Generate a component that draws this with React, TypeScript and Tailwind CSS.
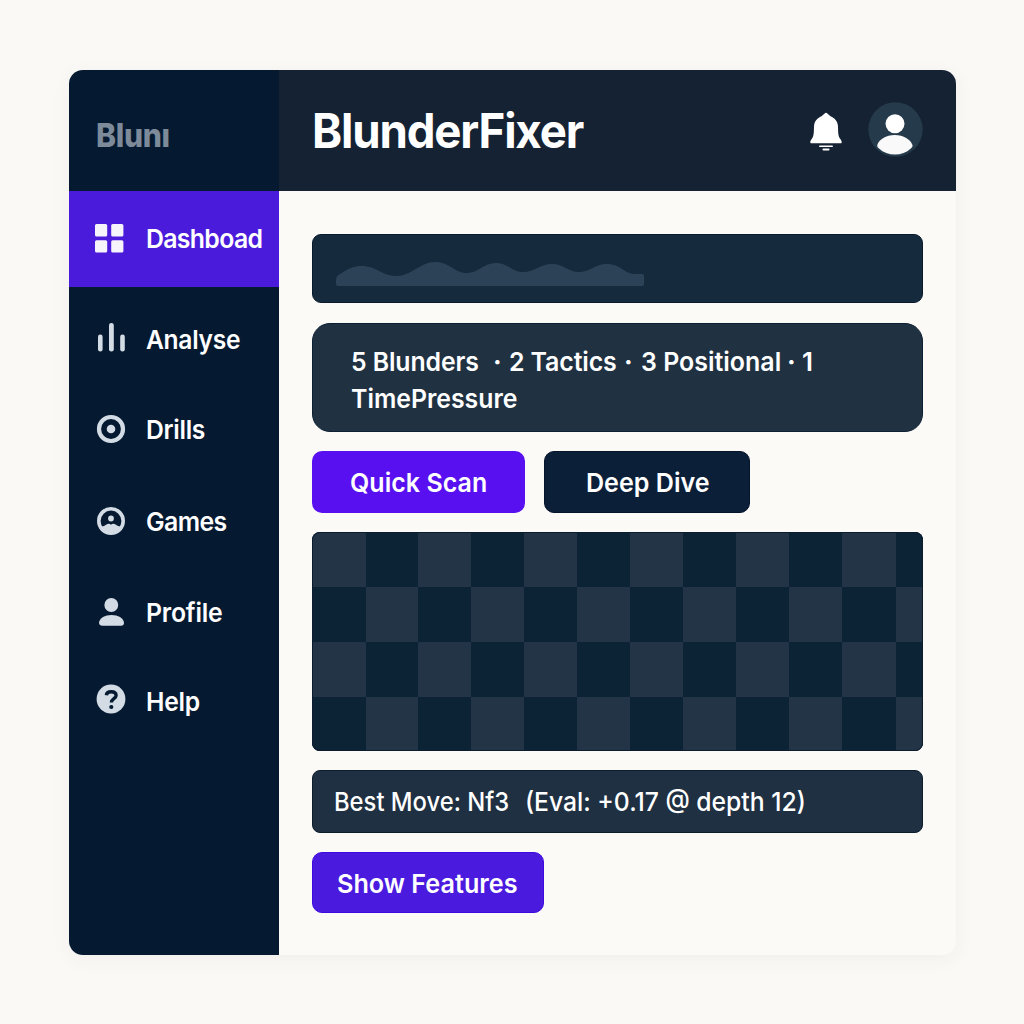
import React from "react";

function Label({ children, className = "" }: { children: React.ReactNode; className?: string }) {
  return <span className={`block origin-left whitespace-pre ${className}`}>{children}</span>;
}

const ICON = "#d3dce5";

function NavItem({ icon, className, children }: { icon: React.ReactNode; className: string; children: React.ReactNode }) {
  return (
    <a className={`flex shrink-0 items-center pl-[27px] text-[26px] leading-8 font-semibold text-white ${className}`}>
      <span className="w-[49.5px] shrink-0">{icon}</span>
      {children}
    </a>
  );
}

const GridIcon = () => (
  <svg width="30" height="30" viewBox="0 0 30 30" className="mt-[-2px] -ml-[2px]" fill="#f6f4fb">
    <rect x="1" y="1" width="12.2" height="12.4" rx="1.5" />
    <rect x="17.2" y="1" width="12.2" height="12.4" rx="1.5" />
    <rect x="1" y="17.2" width="12.2" height="12.4" rx="1.5" />
    <rect x="17.2" y="17.2" width="12.2" height="12.4" rx="1.5" />
  </svg>
);

const BarsIcon = () => (
  <svg width="32" height="30" viewBox="0 0 32 30" className="-ml-px mt-[-6px]" fill={ICON}>
    <rect x="3" y="12.5" width="4.6" height="17" rx="2.2" />
    <rect x="14" y="1" width="4.8" height="28.5" rx="2.3" />
    <rect x="25.2" y="12.5" width="4.6" height="17" rx="2.2" />
  </svg>
);

const TargetIcon = () => (
  <svg width="30" height="30" viewBox="0 0 30 30" className="mt-[-2px]">
    <circle cx="15" cy="15" r="12" fill="none" stroke={ICON} strokeWidth="4.2" />
    <circle cx="15" cy="15" r="4.3" fill={ICON} />
  </svg>
);

const GamesIcon = () => (
  <svg width="30" height="30" viewBox="0 0 30 30" className="mt-[-3px]">
    <circle cx="15" cy="15" r="12.2" fill="none" stroke={ICON} strokeWidth="3.6" />
    <path d="M4 20.5C6.5 20.8 8.5 20 10 18.800C12 17.400 13.800 17.400 15 18.800C16.200 17.400 18 17.400 20 18.800C21.500 20 23.500 20.800 26 20.500A12.300 12.300 0 0 1 4 20.500Z" fill={ICON} />
    <circle cx="15" cy="12.500" r="2.900" fill={ICON} />
  </svg>
);

const ProfileIcon = () => (
  <svg width="30" height="30" viewBox="0 0 30 30" className="mt-[-3px]" fill={ICON}>
    <circle cx="15.300" cy="8" r="6.900" />
    <path d="M3 25.500C3.500 21 9 18 15.500 18S27.500 21 28 25.500Q28 28.700 25 28.700H6.500Q3.200 28.700 3 25.500Z" />
  </svg>
);

const HelpIcon = () => (
  <svg width="30" height="30" viewBox="0 0 30 30" className="mt-[-6px]">
    <circle cx="15" cy="15" r="14.400" fill={ICON} />
    <path d="M10.300 11.300C10.600 8.700 12.500 7.700 15.100 7.700C18 7.700 20.100 9 20.100 11.500C20.100 14.800 15.400 14.700 15.400 18.600" fill="none" stroke="#051931" strokeWidth="3.400" />
    <circle cx="15.300" cy="23" r="2.100" fill="#051931" />
  </svg>
);

const BellIcon = () => (
  <svg width="34" height="40" viewBox="0 0 34 40" className="mt-[3px]" fill="#ffffff">
    <path d="M17 0.800C16 0.800 14.500 2.800 12.500 4.300C8 6.200 5.200 9.500 5 14.500C4.800 20 5 23.500 3 26.600C1.700 28.600 1.200 29.500 1.300 30.400Q1.500 31.300 2.700 31.300H31.300Q32.500 31.300 32.700 30.400C32.800 29.500 32.300 28.600 31 26.600C29 23.500 29.200 20 29 14.500C28.800 9.500 26 6.200 21.500 4.300C19.500 2.800 18 0.800 17 0.800Z" />
    <rect x="10" y="33.400" width="14" height="1.700" rx="0.800" />
    <rect x="13.500" y="36.500" width="7" height="1.900" rx="0.900" />
  </svg>
);

const Avatar = () => (
  <svg width="55" height="55" viewBox="0 0 55 55" className="-mt-[2px]">
    <circle cx="27.500" cy="27.500" r="27.200" fill="#253a4b" />
    <circle cx="27" cy="21.800" r="9.500" fill="#fff" />
    <path d="M9.300 43C11 37.500 18 33 26.800 33S42.500 37.500 44.500 43C44.800 44.500 44 45.500 42.800 46.500C38.500 50.500 33 52.500 27 52.500S15.300 50.500 11 46.500C9.800 45.500 9 44.500 9.300 43Z" fill="#f9f9fa" />
  </svg>
);

const WAVE =
  "M0 17Q0 13 4 11C13 5 19 3 25 3C41 3 46 13 60 13C76 13 84 -1 99 -1C114 -1 118 10 131 10C143 10 147 0 160 0C172 0 176 9 187 9C199 9 204 1 216 1C228 1 232 9 243 9C254 9 259 1 271 1C285 1 288 11 299 11L306 11Q308 11 308 13L308 21Q308 23 306 23L2 23Q0 23 0 21Z";

const ROWS = [0, 1, 2, 3];
const COLS = [0, 1, 2, 3, 4, 5, 6, 7, 8, 9, 10, 11];

function Board() {
  return (
    <div className="mt-[19px] grid h-[219px] w-full grid-cols-[54px_52px_53px_53px_53px_53px_53px_53px_53px_53px_54px_27px] grid-rows-[55px_55px_55px_54px] overflow-hidden rounded-[8px] bg-[#0c2335] outline outline-1 -outline-offset-1 outline-[#0a1c2d]">
      {ROWS.map((r) => COLS.map((c) => <div key={`${r}-${c}`} className={(r + c) % 2 === 0 ? "bg-[#223445]" : "bg-[#0c2335]"} />))}
    </div>
  );
}

export default function App() {
  return (
    <div className="flex h-[1024px] w-[1024px] bg-[#fbf9f6] pt-[70px] pl-[69px] font-['Inter',sans-serif]">
      <div className="flex h-[885px] w-[887px] overflow-hidden rounded-[14px] bg-[#fcfaf7] shadow-[0_4px_20px_rgba(60,50,40,0.05)]">
        <aside className="flex w-[210px] shrink-0 flex-col bg-[#051931]">
          <div className="h-[121px] pt-[46px] pl-[27px]">
            <Label className="scale-x-[0.94] text-[32px] leading-10 font-extrabold tracking-[-0.3px] text-[#7c8a99]">Blunı</Label>
          </div>
          <NavItem className="h-[96px] bg-[#4b1bdc]" icon={<GridIcon />}><Label className="scale-x-[0.955] tracking-[-0.7px]">Dashboad</Label></NavItem>
          <NavItem className="mt-[5px] h-[96px]" icon={<BarsIcon />}><Label className="scale-x-[0.945] tracking-[-0.3px]">Analyse</Label></NavItem>
          <NavItem className="h-[84px]" icon={<TargetIcon />}><Label className="scale-x-[0.95] tracking-[-0.3px]">Drills</Label></NavItem>
          <NavItem className="h-[100px]" icon={<GamesIcon />}><Label className="scale-x-[0.955] tracking-[-0.6px]">Games</Label></NavItem>
          <NavItem className="h-[82px]" icon={<ProfileIcon />}><Label className="scale-x-[0.955] tracking-[-0.2px]">Profile</Label></NavItem>
          <NavItem className="h-[96px]" icon={<HelpIcon />}><Label className="scale-x-[0.95] tracking-[-0.3px]">Help</Label></NavItem>
        </aside>
        <div className="flex min-w-0 flex-1 flex-col">
          <header className="flex h-[121px] items-center bg-[#142233] pr-[33px] pl-[32.5px]">
            <Label className="scale-x-[0.95] text-[48px] font-bold tracking-[-1.2px] text-white">BlunderFixer</Label>
            <div className="ml-auto flex items-center gap-[25.5px]">
              <BellIcon />
              <Avatar />
            </div>
          </header>
          <main className="flex flex-1 flex-col items-start px-[33px] pt-[43px] text-[26px] leading-[37px] font-semibold text-white">
            <div className="h-[69px] w-full rounded-[9px] border border-[#081b2c] bg-[#152a3c] pt-[28px] pl-[23px]">
              <svg className="overflow-visible" width="308" height="23" viewBox="0 0 308 23"><path d={WAVE} fill="#2c4357" /></svg>
            </div>
            <div className="mt-[20px] h-[109px] w-full rounded-[18px] border border-[#0c2033] bg-[#203142] pt-[18.5px] pl-[38px]">
              <div className="flex">
                <Label className="w-[142px] scale-x-[0.955] tracking-[-0.1px]">5 Blunders</Label>
                <Label className="w-[16px] font-bold">·</Label>
                <Label className="w-[115px] scale-x-[0.96] tracking-[-0.15px]">2 Tactics</Label>
                <Label className="w-[16.5px] font-bold">·</Label>
                <Label className="w-[146.5px] scale-x-[0.96]">3 Positional</Label>
                <Label className="w-[15px] font-bold">·</Label>
                <Label>1</Label>
              </div>
              <Label className="w-fit scale-x-[0.955]">TimePressure</Label>
            </div>
            <div className="mt-[19px] flex gap-[19px]">
              <button className="flex h-[62px] w-[213px] items-center rounded-[10px] bg-[#5810f0] pl-[37.5px]"><Label className="scale-x-[0.96] tracking-[0.05px]">Quick Scan</Label></button>
              <button className="flex h-[62px] w-[206px] items-center rounded-[10px] border border-[#04142a] bg-[#0c1f38] pl-[40.5px]"><Label className="scale-x-[0.965]">Deep Dive</Label></button>
            </div>
            <Board />
            <div className="mt-[19px] flex h-[63px] w-full items-center rounded-[8px] border border-[#0c1d2c] bg-[#1f3042] pl-[21px] font-medium">
              <Label className="w-[191px] scale-x-[0.915]">Best Move: Nf3</Label>
              <Label className="scale-x-[0.95]">(Eval: +0.17 @ depth 12)</Label>
            </div>
            <button className="mt-[19px] flex h-[61px] w-[232px] items-center rounded-[10px] border border-[#3d0ae0] bg-[#4b1adf] pt-px pl-[23.5px]"><Label className="scale-x-[0.97]">Show Features</Label></button>
          </main>
        </div>
      </div>
    </div>
  );
}
